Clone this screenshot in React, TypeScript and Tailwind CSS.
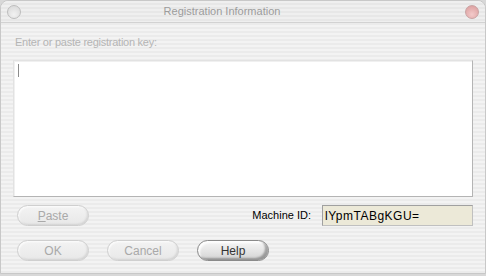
import React from 'react';

const font = "font-['Liberation_Sans',Arial,sans-serif]";

const PillButton = ({ label, enabled = false, underline }: { label: string; enabled?: boolean; underline?: boolean }) => (
  <button
    className={`w-[72px] h-[21px] rounded-full text-[12px] leading-none flex items-center justify-center ${
      enabled
        ? 'text-[#333] border border-[#8a8a8a] bg-[linear-gradient(180deg,#f7f7f7,#e4e4e4_55%,#d2d2d2)] shadow-[inset_-3px_-2px_2px_rgba(0,0,0,0.3),inset_2px_2px_2px_rgba(255,255,255,0.9)]'
        : 'text-[#a9a9a9] border border-[#cfcfcf] bg-[linear-gradient(180deg,#f3f3f3,#e8e8e8)] shadow-[inset_-1px_-1px_2px_rgba(0,0,0,0.1),inset_1px_1px_2px_rgba(255,255,255,0.9)]'
    }`}
  >
    {underline ? (
      <span>
        <span className="underline">{label[0]}</span>
        {label.slice(1)}
      </span>
    ) : (
      label
    )}
  </button>
);

const App = () => {
  return (
    <div className={`w-[486px] h-[276px] bg-[#d8d8d8] ${font}`}>
      <div className="w-full h-[274px] rounded-t-[8px] border border-[#c8c8c8] flex flex-col bg-[repeating-linear-gradient(180deg,#f3f3f3_0px,#f3f3f3_2px,#ebebeb_2px,#ebebeb_4px)]">
        {/* title bar */}
        <div className="h-[22px] flex items-center justify-between px-[6px] border-b border-[#d2d2d2] bg-[repeating-linear-gradient(180deg,#efefef_0px,#efefef_2px,#e7e7e7_2px,#e7e7e7_4px)] rounded-t-[8px]">
          <div className="w-[14px] h-[14px] rounded-full border border-[#bdbdbd] bg-[radial-gradient(circle_at_50%_70%,#f2f2f2,#d6d6d6)]" />
          <span className="mr-[42px] text-[11px] text-[#9c9c9c]">Registration Information</span>
          <div className="w-[14px] h-[14px] rounded-full border border-[#c9a3a3] bg-[radial-gradient(circle_at_50%_70%,#f3caca,#d99a9a)]" />
        </div>

        <div className="flex flex-col px-[12px] pt-[12px]">
          <span className="pl-[2px] text-[11px] tracking-[-0.25px] text-[#b5b5b5] leading-[14px]">Enter or paste registration key:</span>
          <div className="mt-[11px] w-[460px] h-[137px] border border-[#b4b4b4] border-t-[#e2e2e2] border-l-[#e2e2e2] bg-white shadow-[inset_1px_1px_0_#f0f0f0] pl-[4px] pt-[3px]">
            <div className="w-[1px] h-[13px] bg-[#8c8c8c]" />
          </div>

          <div className="mt-[8px] flex items-center justify-between pl-[4px]">
            <PillButton label="Paste" underline />
            <div className="flex items-center gap-[11px]">
              <span className="text-[11px] text-black">Machine ID:</span>
              <div className="w-[151px] h-[21px] bg-[#ece9d8] border border-[#c0c0c0] border-t-[#a0a0a0] border-l-[#a0a0a0] flex items-center pl-[2px] text-[12px] tracking-[0.5px] text-black">
                lYpmTABgKGU=
              </div>
            </div>
          </div>

          <div className="mt-[14px] flex items-center gap-[18px] pl-[4px]">
            <PillButton label="OK" />
            <PillButton label="Cancel" />
            <PillButton label="Help" enabled />
          </div>
        </div>
      </div>
    </div>
  );
};

export default App;
